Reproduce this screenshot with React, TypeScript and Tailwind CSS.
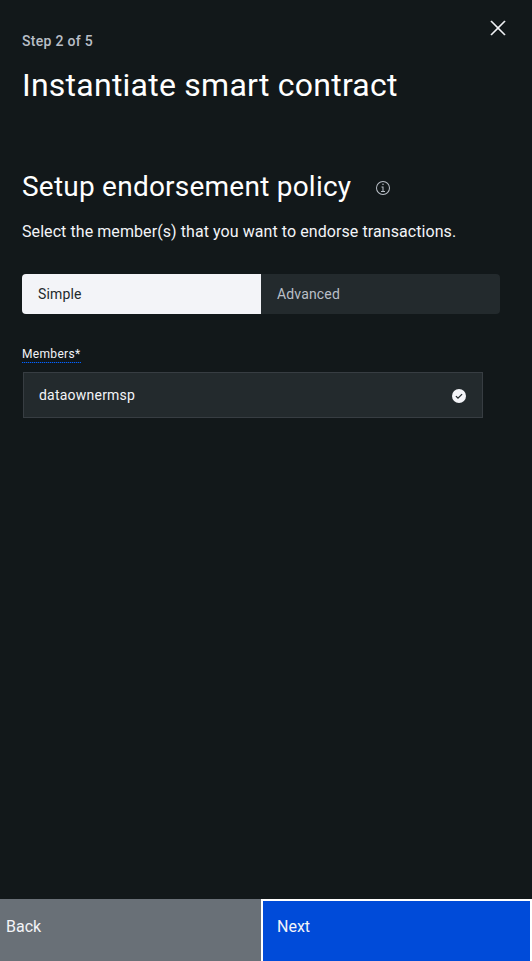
import React from 'react';

function CloseIcon() {
  return (
    <svg width="32" height="32" viewBox="0 0 32 32" fill="#f3f4f8" aria-hidden="true">
      <path d="M23.3 9.6L22.4 8.7 16 15.1 9.6 8.7 8.7 9.6l6.4 6.4-6.4 6.4.9.9 6.4-6.4 6.4 6.4.9-.9-6.4-6.4z" stroke="#f3f4f8" strokeWidth=".4" />
    </svg>
  );
}

function InfoIcon() {
  return (
    <svg width="16" height="16" viewBox="0 0 16 16" fill="#b9bfc7" aria-hidden="true">
      <path d="M8.5 11V6.5h-2v1h1V11H6v1h4v-1zM8 3.5a.75.75 0 1 0 0 1.5.75.75 0 0 0 0-1.5z" />
      <path d="M8 15A7 7 0 1 1 8 1a7 7 0 0 1 0 14zM8 2a6 6 0 1 0 0 12A6 6 0 0 0 8 2z" />
    </svg>
  );
}

function CheckIcon() {
  return (
    <svg width="16" height="16" viewBox="0 0 16 16" aria-hidden="true">
      <circle cx="8" cy="8" r="7" fill="#f3f4f8" />
      <path d="M4.9 8.1L7 10.2l4.1-4.1" fill="none" stroke="#232a2d" strokeWidth="1.3" />
    </svg>
  );
}

export default function App() {
  return (
    <div className="flex h-[961px] w-[532px] flex-col overflow-hidden bg-[#12181a] font-[Roboto,sans-serif] text-[#f3f4f8]">
      <main className="flex-1 pl-[22px]">
        <header className="flex h-[163px] justify-between pr-[18px]">
          <div className="pt-8">
            <p className="text-sm leading-[18px] font-medium tracking-[0.3px] whitespace-nowrap text-[#b9bfc7]">Step 2 of 5</p>
            <h1 className="mt-[15px] text-[32px] leading-10 tracking-[0.24px] whitespace-nowrap text-white">Instantiate smart contract</h1>
          </div>
          <button type="button" aria-label="Close" className="mt-3 size-8">
            <CloseIcon />
          </button>
        </header>

        <div className="flex items-center pt-[6px]">
          <h2 className="text-[28px] leading-9 tracking-[0.23px] whitespace-nowrap text-white">Setup endorsement policy</h2>
          <span className="mt-[2px] ml-6">
            <InfoIcon />
          </span>
        </div>
        <p className="mt-[15px] text-base leading-6 tracking-[0.075px] whitespace-nowrap">Select the member(s) that you want to endorse transactions.</p>

        <div className="mt-[30px] flex h-10 w-[478px] overflow-hidden rounded text-sm tracking-[0.16px]">
          <button type="button" className="w-[239px] bg-[#f3f4f8] pl-4 text-left text-[#232a2d]">Simple</button>
          <button type="button" className="w-[239px] bg-[#232a2d] pl-4 text-left text-[#b9bfc7]">Advanced</button>
        </div>

        <div className="mt-8 flex">
          <label className="h-[17px] w-[59px] bg-[repeating-linear-gradient(90deg,#0062ff_0_1px,#12294d_1px_2px)] bg-[length:100%_1px] bg-bottom bg-no-repeat text-xs leading-4 tracking-[0.32px]">Members*</label>
        </div>
        <div className="mt-[9px] ml-px flex h-[46px] w-[460px] items-center justify-between border border-[#373d42] bg-[#232a2d] pr-[15px] pl-[15px]">
          <span className="text-sm tracking-[0.22px]">dataownermsp</span>
          <span className="mt-0.5">
            <CheckIcon />
          </span>
        </div>
      </main>

      <footer className="flex h-[62px] text-base leading-6">
        <button type="button" className="flex w-[261px] items-start bg-[#697077] pt-4 pl-1.5">Back</button>
        <button type="button" className="flex w-[271px] items-start border-2 border-b-0 border-white bg-[#004bd9] pt-3.5 pl-3.5">Next</button>
      </footer>
    </div>
  );
}
